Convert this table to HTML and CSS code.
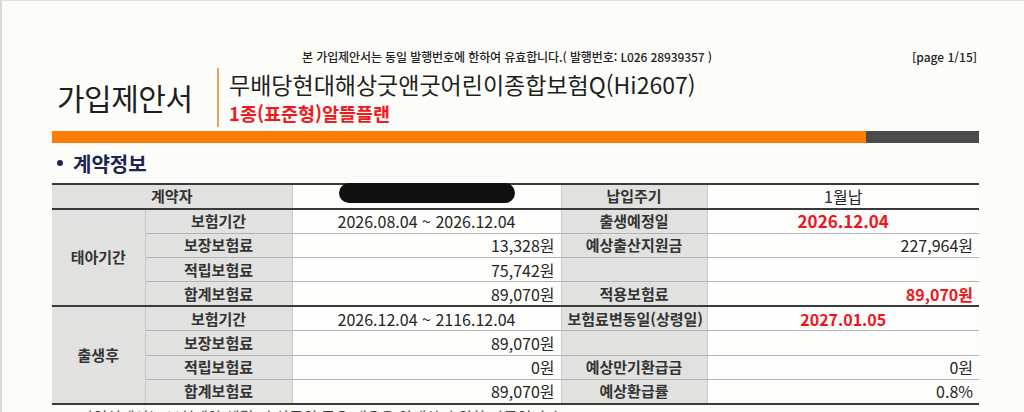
FILE: index.html
```html
<!DOCTYPE html>
<html lang="ko">
<head>
<meta charset="utf-8">
<title>가입제안서</title>
<link rel="stylesheet" href="styles.css">
</head>
<body>
<div class="page">
  <div class="notice-row">
    <span class="notice">본 가입제안서는 동일 발행번호에 한하여 유효합니다.( 발행번호: L026 28939357 )</span>
    <span class="page-no">[page 1/15]</span>
  </div>
  <div class="title-row">
    <div class="doc-title">가입제안서</div>
    <div class="divider"></div>
    <div class="product">
      <div class="product-name">무배당현대해상굿앤굿어린이종합보험Q(Hi2607)</div>
      <div class="plan-name">1종(표준형)알뜰플랜</div>
    </div>
  </div>
  <div class="bar"><div class="bar-orange"></div><div class="bar-gray"></div></div>
  <div class="section-title"><span class="bullet"></span>계약정보</div>
  <table class="info">
    <colgroup>
      <col class="c1"><col class="c2"><col class="c3"><col class="c4"><col class="c5">
    </colgroup>
    <tr class="row-head">
      <th colspan="2">계약자</th>
      <td class="center"><span class="redact"></span></td>
      <th>납입주기</th>
      <td class="center">1월납</td>
    </tr>
    <tr>
      <th rowspan="4" class="group">태아기간</th>
      <th>보험기간</th>
      <td class="center">2026.08.04 ~ 2026.12.04</td>
      <th>출생예정일</th>
      <td class="center red big">2026.12.04</td>
    </tr>
    <tr>
      <th>보장보험료</th>
      <td class="right">13,328원</td>
      <th>예상출산지원금</th>
      <td class="right">227,964원</td>
    </tr>
    <tr>
      <th>적립보험료</th>
      <td class="right">75,742원</td>
      <th></th>
      <td></td>
    </tr>
    <tr class="group-end">
      <th>합계보험료</th>
      <td class="right">89,070원</td>
      <th>적용보험료</th>
      <td class="right red">89,070원</td>
    </tr>
    <tr>
      <th rowspan="4" class="group">출생후</th>
      <th>보험기간</th>
      <td class="center">2026.12.04 ~ 2116.12.04</td>
      <th>보험료변동일(상령일)</th>
      <td class="center red">2027.01.05</td>
    </tr>
    <tr>
      <th>보장보험료</th>
      <td class="right">89,070원</td>
      <th></th>
      <td></td>
    </tr>
    <tr>
      <th>적립보험료</th>
      <td class="right">0원</td>
      <th>예상만기환급금</th>
      <td class="right">0원</td>
    </tr>
    <tr class="last">
      <th>합계보험료</th>
      <td class="right">89,070원</td>
      <th>예상환급률</th>
      <td class="right">0.8%</td>
    </tr>
  </table>
  <div class="footnote">- 가입설계서는 보험계약 체결 전 상품의 주요 내용을 안내하기 위한 자료입니다.</div>
</div>
</body>
</html>
```

FILE: styles.css
```css
* { box-sizing: border-box; }
html, body { margin: 0; padding: 0; }
body {
  background: #fcfcf9;
  font-family: "Noto Sans CJK KR", "Noto Sans", sans-serif;
  color: #222;
}
.page {
  width: 1024px;
  height: 412px;
  overflow: hidden;
  border-left: 2px solid #d9d9d9;
  border-top: 1px solid #e2e2e2;
  padding-left: 50px;
}
.notice-row {
  display: flex;
  align-items: center;
  height: 14px;
  margin-top: 49px;
  width: 927px;
  font-size: 12px;
  line-height: 14px;
  color: #222;
  font-weight: 500;
}
.notice { margin-left: 250px; letter-spacing: -0.1px; }
.page-no { margin-left: auto; margin-right: 2px; }
.title-row {
  display: flex;
  height: 59px;
  margin-top: 4px;
}
.doc-title {
  width: 165px;
  padding-left: 5px;
  font-size: 30px;
  line-height: 59px;
  color: #1e1e1e;
  letter-spacing: -0.5px;
}
.divider {
  width: 2px;
  background: #e3a464;
}
.product {
  padding-left: 10px;
  display: flex;
  flex-direction: column;
  justify-content: center;
  gap: 2px;
}
.product-name {
  font-size: 23px;
  line-height: 29px;
  color: #1e1e1e;
}
.plan-name {
  font-size: 18.5px;
  line-height: 24px;
  font-weight: 700;
  color: #f0191e;
}
.bar {
  display: flex;
  width: 927px;
  height: 12px;
  margin-top: 4px;
}
.bar-orange { flex: 1; background: #fc7c08; }
.bar-gray { width: 113px; background: #4b4b4b; }
.section-title {
  display: flex;
  align-items: center;
  height: 40px;
  padding-left: 5px;
  font-size: 20px;
  font-weight: 700;
  color: #1b2454;
}
.bullet {
  width: 6px;
  height: 6px;
  border-radius: 50%;
  background: #1b2454;
  margin-right: 10px;
}
table.info {
  width: 927px;
  table-layout: fixed;
  border-collapse: collapse;
  border-top: 2px solid #3a3a3a;
  border-bottom: 2px solid #3a3a3a;
  font-size: 15px;
}
.c1 { width: 93px; }
.c2 { width: 147px; }
.c3 { width: 269px; }
.c4 { width: 146px; }
.c5 { width: 272px; }
table.info tr { height: 24.4px; }
table.info th, table.info td {
  padding: 0 6px;
  line-height: 20px;
  border: 1px solid #b4b4b4;
  border-left: 1px solid #c8c8c8;
  border-right: 1px solid #c8c8c8;
  white-space: nowrap;
}
table.info tr > :first-child { border-left: none; }
table.info tr > :last-child { border-right: none; }
table.info th {
  background: #e1e1df;
  font-weight: 700;
  color: #333;
  text-align: center;
}
table.info td {
  background: #fdfdfb;
  font-size: 16px;
  color: #262626;
}
table.info .row-head th,
table.info .row-head td { border-bottom: 2px solid #3a3a3a; }
table.info .group-end th,
table.info .group-end td,
table.info th.group { border-bottom: 2px solid #3a3a3a; }
table.info .last th, table.info .last td { border-bottom: 2px solid #3a3a3a; }
.center { text-align: center; }
.right { text-align: right; }
table.info td.red { color: #f0141c; font-weight: 700; }
table.info td.big { font-size: 17px; }
.redact {
  display: inline-block;
  width: 176px;
  height: 20px;
  border-radius: 10px;
  background: #101010;
  vertical-align: middle;
  transform: translateY(-5px);
}
.footnote {
  margin-top: 2px;
  padding-left: 18px;
  font-size: 15px;
  line-height: 20px;
  color: #444;
}
```
